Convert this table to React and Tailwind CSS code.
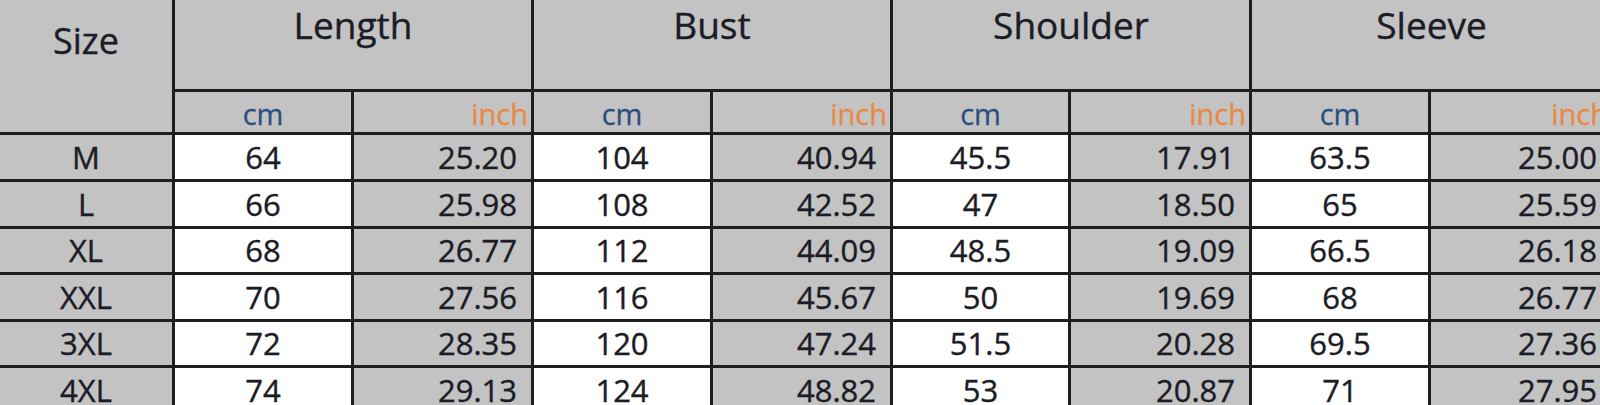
const GROUPS = ['Length', 'Bust', 'Shoulder', 'Sleeve']

const ROWS = [
  ['M', '64', '25.20', '104', '40.94', '45.5', '17.91', '63.5', '25.00'],
  ['L', '66', '25.98', '108', '42.52', '47', '18.50', '65', '25.59'],
  ['XL', '68', '26.77', '112', '44.09', '48.5', '19.09', '66.5', '26.18'],
  ['XXL', '70', '27.56', '116', '45.67', '50', '19.69', '68', '26.77'],
  ['3XL', '72', '28.35', '120', '47.24', '51.5', '20.28', '69.5', '27.36'],
  ['4XL', '74', '29.13', '124', '48.82', '53', '20.87', '71', '27.95'],
]

const font = { fontFamily: '"Open Sans", "Noto Sans", sans-serif' }

// slight stroke to mimic the heavier ClearType rendering of the source
const ink = 'text-[#1c1c26] [-webkit-text-stroke:0.4px_#1c1c26]'

export default function App() {
  return (
    <div className="w-[1600px] h-[405px] overflow-hidden bg-[#c3c3c3]" style={font}>
      <div
        className="grid w-[1610px] gap-[3px] bg-[#1e1e1e]
                   grid-cols-[172px_176px_177px_176px_177px_175px_178px_176px_180px]
                   grid-rows-[89px_40px_44px_44px_43px_44px_43px_45px]"
      >
        {/* Size header spans both header rows */}
        <div className={'row-span-2 bg-[#c3c3c3] flex justify-center pt-[14px] text-[36px] leading-normal ' + ink}>
          Size
        </div>

        {GROUPS.map((g) => (
          <div
            key={g}
            className={'col-span-2 bg-[#c3c3c3] flex justify-center pt-[6px] text-[37px] leading-none ' + ink}
          >
            {g}
          </div>
        ))}

        {GROUPS.map((g) => (
          <div key={g + '-units'} className="contents">
            <div className="bg-[#c3c3c3] flex items-start justify-center text-[29px] leading-normal text-[#2b4f7e] [-webkit-text-stroke:0.3px_#2b4f7e]">
              cm
            </div>
            <div className="bg-[#c3c3c3] flex items-start justify-end pr-[3px] text-[29px] leading-normal text-[#e98a44] [-webkit-text-stroke:0.3px_#e98a44]">
              inch
            </div>
          </div>
        ))}

        {ROWS.map((row) =>
          row.map((v, i) => {
            const isSize = i === 0
            const isCm = i % 2 === 1
            return (
              <div
                key={row[0] + '-' + i}
                className={
                  'flex items-center text-[31px] leading-none ' + ink + ' ' +
                  (isCm ? 'bg-white justify-center' : isSize ? 'bg-[#c3c3c3] justify-center' : 'bg-[#c3c3c3] justify-end pr-[14px]')
                }
              >
                {v}
              </div>
            )
          })
        )}
      </div>
    </div>
  )
}
